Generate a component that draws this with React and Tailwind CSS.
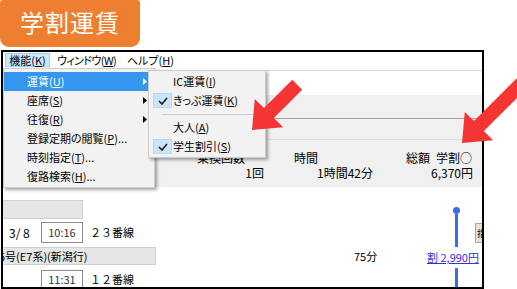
import React from "react";

const U = ({ c }) => <span className="underline">{c}</span>;

function Tri({ white }) {
  return (
    <svg width="4" height="7" viewBox="0 0 4 7" className="absolute right-[7px] top-[6px]">
      <polygon points="0,0 4,3.5 0,7" fill={white ? "#ffffff" : "#000000"} />
    </svg>
  );
}

function Check() {
  return (
    <div className="absolute left-[4px] top-[2px] w-[19px] h-[15px] bg-[#cce4f7] border border-[#b4d8f5] flex items-center justify-center">
      <svg width="10" height="8" viewBox="0 0 10 8">
        <path d="M1 4 L4 7 L9 1" fill="none" stroke="#1a1a1a" strokeWidth="1.6" />
      </svg>
    </div>
  );
}

export default function App() {
  return (
    <div className="relative w-[517px] h-[289px] overflow-hidden bg-white text-black [font-family:'Noto_Sans_CJK_JP','Noto_Sans',sans-serif]">
      {/* badge */}
      <div className="w-[140px] h-[47px] bg-[#ee7f31] rounded-b-[9px] rounded-t-[3px] flex items-center justify-center pb-[4px]">
        <span className="text-white text-[24px] leading-none tracking-[1px]">学割運賃</span>
      </div>

      {/* window */}
      <div className="relative mt-[3px] ml-px w-[483px] h-[239px] border-2 border-black bg-white overflow-hidden">
        {/* menubar */}
        <div className="h-[16px] grid grid-cols-[45px_63px_60px] gap-x-[7px] items-center pl-[2px] text-[11px] leading-none [font-feature-settings:'palt']">
          <div className="h-[14px] bg-[#cce8ff] border border-[#99d1ff] flex items-center justify-center">
            機能(<U c="K" />)
          </div>
          <div className="whitespace-nowrap tracking-[-0.6px]">
            ウィンドウ(<U c="W" />)
          </div>
          <div className="whitespace-nowrap">
            ヘルプ(<U c="H" />)
          </div>
        </div>
        <div className="h-[2px]" />
        <div className="border-t border-[#d4d4d4]" />
        <div className="h-[24px]" />
        {/* gray result area */}
        <div className="h-[92px] bg-[#f0f0f0] text-[12px] leading-none">
          <div className="h-[23px]" />
          <div className="border-t border-[#a3a3a3]" />
          <div className="h-[20px]" />
          <div className="border-t border-[#dcdcdc]" />
          <div className="pt-[10px]">
            <div className="h-[15px] flex items-center">
              <div className="ml-[187px] w-[76px] pl-[7px]">乗換回数</div>
              <div className="w-[134px] pl-[28px]">時間</div>
              <div className="w-[76px] text-right pr-[4px] whitespace-nowrap">
                総額<span className="ml-[6px]">学割○</span>
              </div>
            </div>
            <div className="h-[15px] flex items-center">
              <div className="ml-[187px] w-[76px] text-right pr-[2px]">1回</div>
              <div className="w-[134px] pl-[51px]">1時間42分</div>
              <div className="w-[76px] text-right pr-[3px]">6,370円</div>
            </div>
          </div>
        </div>

        {/* lower area */}
        <div className="h-[100px] flex text-[11px] leading-none">
          <div className="w-[417px] pt-[13px]">
            <div className="h-[19px] flex">
              <div className="-ml-px w-[81px] h-[19px] bg-[#e6e6e6] border border-[#d0d0d0]" />
            </div>
            <div className="mt-[3px] h-[21px] flex items-center">
              <div className="w-[38px] pl-[6px] text-[12px]">3/ 8</div>
              <div className="w-[42px] h-[21px] border border-[#8c8c8c] bg-white flex items-center justify-center text-[#333]">
                10:16
              </div>
              <div className="ml-[7px]">２３番線</div>
            </div>
            <div className="mt-[4px] h-[18px] flex items-center">
              <div className="-ml-px w-[154px] h-[18px] bg-[#e6e6e6] border border-[#cfcfcf] flex items-center overflow-hidden whitespace-nowrap">
                <span className="-ml-[4px]">5号(E7系)(新潟行)</span>
              </div>
              <div className="ml-[198px]">75分</div>
            </div>
            <div className="mt-[5px] h-[19px] flex items-center">
              <div className="w-[38px]" />
              <div className="w-[42px] h-[19px] border border-[#8c8c8c] bg-white flex items-center justify-center text-[#333]">
                11:31
              </div>
              <div className="ml-[7px]">１２番線</div>
            </div>
          </div>
          <div className="w-[55px] flex flex-col pt-[20px]">
            <div className="ml-[33px] w-[7px] h-[7px] rounded-full bg-[#3b6ee6]" />
            <div className="ml-[35px] w-[3px] h-[33px] bg-[#3b6ee6]" />
            <div className="h-[21px] flex items-center ml-[7px] whitespace-nowrap text-[#3333dd] underline">
              割 2,990円
            </div>
            <div className="ml-[35px] w-[3px] flex-1 bg-[#3b6ee6]" />
          </div>
          <div className="w-[7px] pt-[36px]">
            <div className="w-[12px] h-[20px] border border-[#a6a6a6] bg-[#e3e3e3] text-[9px] flex items-center pl-[1px]">
              指
            </div>
          </div>
        </div>
      </div>

      {/* dropdown menu */}
      <div className="absolute left-[3px] top-[68px] w-[152px] h-[120px] bg-[#f2f2f2] border border-[#cccccc] shadow-[2px_2px_3px_rgba(0,0,0,0.35)] pt-[3px] text-[11px] leading-none [font-feature-settings:'palt']">
        <div className="relative h-[19px] flex items-center pl-[23px] bg-[#3596f0] text-white">
          運賃(<U c="U" />)
          <Tri white />
        </div>
        <div className="relative h-[19px] flex items-center pl-[23px]">
          座席(<U c="S" />)
          <Tri />
        </div>
        <div className="relative h-[19px] flex items-center pl-[23px]">
          往復(<U c="R" />)
          <Tri />
        </div>
        <div className="relative h-[19px] flex items-center pl-[23px]">
          登録定期の閲覧(<U c="P" />)...
        </div>
        <div className="relative h-[19px] flex items-center pl-[23px]">
          時刻指定(<U c="T" />)...
        </div>
        <div className="relative h-[19px] flex items-center pl-[23px]">
          復路検索(<U c="H" />)...
        </div>
      </div>

      {/* submenu */}
      <div className="absolute left-[148px] top-[70px] w-[118px] h-[88px] bg-[#f2f2f2] border border-[#cccccc] shadow-[2px_2px_3px_rgba(0,0,0,0.35)] pt-[1px] text-[11px] leading-none [font-feature-settings:'palt']">
        <div className="relative h-[19px] flex items-center pl-[24px]">
          IC運賃(<U c="I" />)
        </div>
        <div className="relative h-[19px] flex items-center pl-[24px]">
          <Check />
          きっぷ運賃(<U c="K" />)
        </div>
        <div className="h-[8px] flex items-center">
          <div className="ml-[13px] w-[98px] h-px bg-[#cccccc]" />
        </div>
        <div className="relative h-[19px] flex items-center pl-[24px]">
          大人(<U c="A" />)
        </div>
        <div className="relative h-[19px] flex items-center pl-[24px]">
          <Check />
          学生割引(<U c="S" />)
        </div>
      </div>

      {/* red arrows */}
      <svg className="absolute left-[250px] top-[74px] overflow-visible" width="56" height="58" viewBox="0 0 56 58">
        <polygon points="2,56 33.1,53.2 23.9,44 52.2,15.7 42.3,5.8 14,34.1 4.8,24.9" fill="#f53434" />
      </svg>
      <svg className="absolute left-[460px] top-[87px] overflow-visible" width="56" height="58" viewBox="0 0 56 58">
        <polygon points="2,56 33.1,53.2 23.9,44 66.4,1.6 56.5,-8.4 14,34.1 4.8,24.9" fill="#f53434" />
      </svg>
    </div>
  );
}
